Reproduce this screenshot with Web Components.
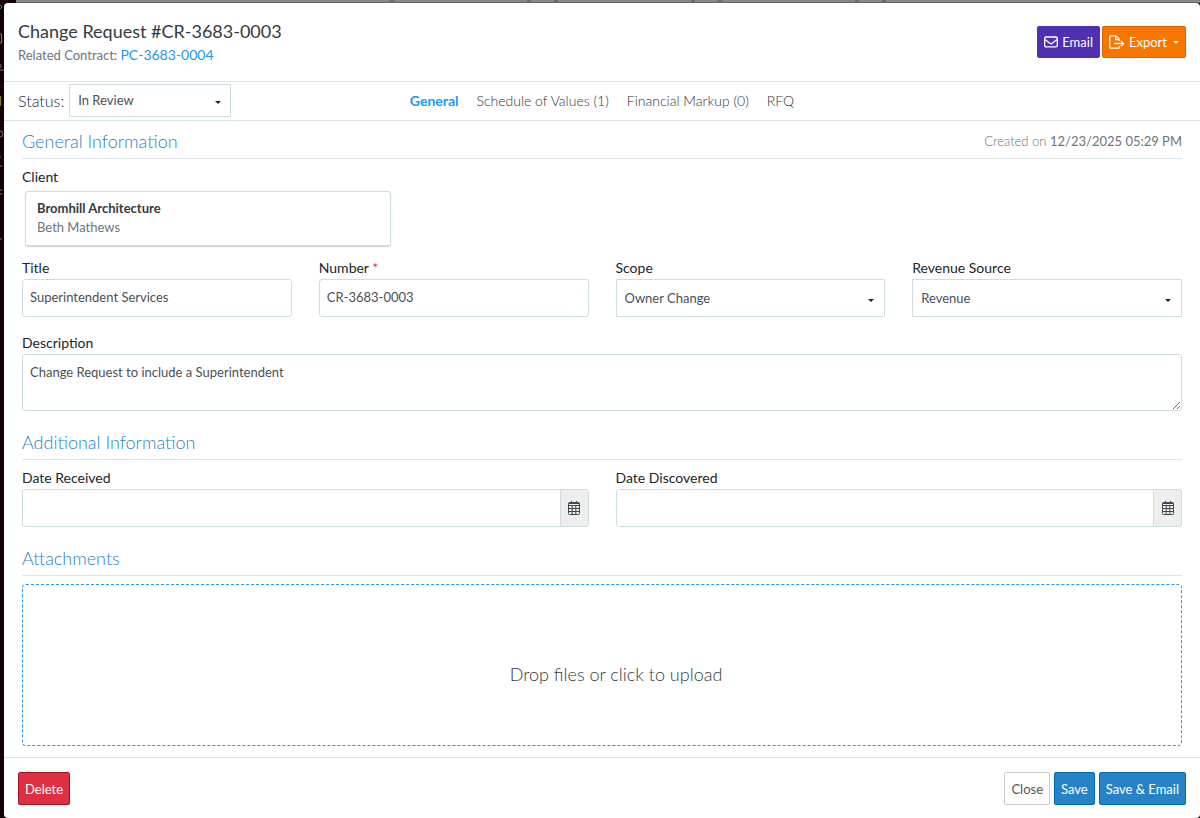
<!DOCTYPE html>
<html lang="en">
<head>
<meta charset="utf-8">
<meta name="viewport" content="width=device-width, initial-scale=1">
<title>Change Request #CR-3683-0003</title>
<style>
  * {
    box-sizing: border-box;
  }

  body {
    --line: #dbe5e5;
    --field-line: #cddddd;
    --blue: #2684c6;
    --link: #2196f3;
    margin: 0;
    min-height: 100vh;
    display: flex;
    font-family: Lato, "Liberation Sans", sans-serif;
    font-size: 14px;
    line-height: 20px;
    color: #212529;
    background: #130304;
  }

  page-backdrop {
    position: absolute;
    top: 0;
    left: 0;
    right: 0;
    height: 250px;
  }

  request-dialog {
    flex: 1;
    margin: 3px 0 0 4px;
  }
</style>
</head>
<body>
<page-backdrop></page-backdrop>

<request-dialog>
  <dialog-title slot="header" heading="Change Request #CR-3683-0003" label="Related Contract:" contract="PC-3683-0004"></dialog-title>
  <action-button slot="header" kind="email" icon="mail">Email</action-button>
  <action-button slot="header" kind="export" icon="export" caret>Export</action-button>

  <status-picker slot="toolbar" value="In Review"></status-picker>
  <tab-bar slot="toolbar" tabs="General|Schedule of Values (1)|Financial Markup (0)|RFQ"></tab-bar>

  <form-section heading="General Information">
    <created-stamp slot="aside" date="12/23/2025 05:29 PM"></created-stamp>
    <client-card label="Client" company="Bromhill Architecture" person="Beth Mathews"></client-card>
    <field-row>
      <form-field label="Title" value="Superintendent Services"></form-field>
      <form-field label="Number" value="CR-3683-0003" required></form-field>
      <form-field type="select" label="Scope" value="Owner Change"></form-field>
      <form-field type="select" label="Revenue Source" value="Revenue"></form-field>
    </field-row>
    <field-row>
      <form-field type="textarea" label="Description" value="Change Request to include a Superintendent"></form-field>
    </field-row>
  </form-section>

  <form-section heading="Additional Information">
    <field-row>
      <form-field type="date" label="Date Received"></form-field>
      <form-field type="date" label="Date Discovered"></form-field>
    </field-row>
  </form-section>

  <form-section heading="Attachments">
    <drop-zone>Drop files or click to upload</drop-zone>
  </form-section>

  <action-button slot="footer-start" kind="danger">Delete</action-button>
  <action-button slot="footer-end" kind="plain">Close</action-button>
  <action-button slot="footer-end" kind="primary">Save</action-button>
  <action-button slot="footer-end" kind="primary">Save &amp; Email</action-button>
</request-dialog>

<script>
const icons = {
  mail: `<svg width="14" height="12" viewBox="0 0 14 12" fill="none" stroke="currentColor" stroke-width="1.3">
      <rect x=".7" y="1" width="12.6" height="9.8" rx="1.3"/>
      <path d="M1 3.6 5.8 7.3Q7 8.2 8.2 7.3L13 3.6"/>
    </svg>`,
  export: `<svg width="16" height="14" viewBox="0 0 16 14" fill="none" stroke="currentColor" stroke-width="1.3">
      <path d="M10.3 6V4.2L7 .8H1.9Q.8.8.8 1.9V12Q.8 13.2 1.9 13.2H9.2Q10.3 13.2 10.3 12V11"/>
      <path d="M6.6 1V4.6H10.3M5 8.5H14.5M11.8 5.8 14.6 8.5 11.8 11.2"/>
    </svg>`,
  calendar: `<svg width="12" height="14" viewBox="0 0 12 14" fill="none" stroke="#3f4650">
      <rect x=".5" y="1.5" width="11" height="12" rx="1"/>
      <path d="M.5 2.5H11.5M.5 4.5H11.5M.5 7.5H11.5M.5 10.5H11.5M4.2 4.5V13.5M7.8 4.5V13.5M3.5 0V2M8.5 0V2"/>
    </svg>`
};

class BaseElement extends HTMLElement {
  constructor() {
    super();
    this.shadow = this.attachShadow({mode: 'open'});
  }

  connectedCallback() {
    this.shadow.innerHTML = this.render();
  }

  attr(name) {
    return this.getAttribute(name) || '';
  }
}

// Strip of the app that stays visible behind the dialog
class PageBackdrop extends BaseElement {
  render() {
    return `<style>
      :host { display: block; }
      .top {
        display: flex;
        box-sizing: border-box;
        height: 3px;
        margin-left: 16px;
        background: #878787;
        border-bottom: 1px solid #666;
      }
      .top i {
        box-sizing: border-box;
        width: 31px;
        margin-left: 133px;
        border: solid #6b6b6b;
        border-width: 0 4px;
      }
      .top i:first-child { width: 4px; border-width: 0 4px 0 0; margin-left: 374px; }
      svg { display: block; }
    </style>
    <div class="top"><i></i><i></i><i></i><i></i></div>
    <svg width="4" height="247" fill="none" stroke="#77706f">
      <path d="M0 2 2 4 0 6"/>
      <path d="M0 31H1.5V40H0" stroke="#8c7a5c"/>
      <path d="M0 61Q3 63 0 65M0 67H4"/>
      <path d="M.5 93V103" stroke="#94742a"/>
      <path d="M0 128Q3 128 3 131Q3 134 0 134"/>
      <path d="M0 154H1M0 163H2M0 187H2M0 191H2M0 236H2"/>
    </svg>`;
  }
}

class RequestDialog extends BaseElement {
  render() {
    return `<style>
      :host {
        position: relative;
        display: flex;
        flex-direction: column;
        background: #fff;
        border-radius: 4px;
      }
      header {
        display: flex;
        align-items: center;
        gap: 2px;
        padding: 15px 14px;
        border-bottom: 1px solid var(--line);
      }
      nav {
        display: grid;
        grid-template-columns: 1fr auto 1fr;
        align-items: center;
        padding: 2px 14px 3px;
        border-bottom: 1px solid var(--line);
      }
      main {
        flex: 1;
        display: flex;
        flex-direction: column;
        gap: 17px;
        padding: 6px 18px 11px;
      }
      footer {
        display: flex;
        justify-content: space-between;
        padding: 14px 14px 13px;
        border-top: 1px solid var(--line);
      }
      footer div { display: flex; gap: 4px; }
    </style>
    <header><slot name="header"></slot></header>
    <nav><slot name="toolbar"></slot></nav>
    <main><slot></slot></main>
    <footer>
      <div><slot name="footer-start"></slot></div>
      <div><slot name="footer-end"></slot></div>
    </footer>`;
  }
}

class DialogTitle extends BaseElement {
  render() {
    return `<style>
      :host { display: block; flex: 1; }
      h1 { margin: 0; font-size: 18px; line-height: 26px; font-weight: 400; color: #343a40; }
      p { margin: 0; font-size: 13px; line-height: 22px; color: #6c757d; }
      a { color: var(--link); font-size: 14px; text-decoration: none; }
    </style>
    <h1>${this.attr('heading')}</h1>
    <p>${this.attr('label')} <a href="#contract">${this.attr('contract')}</a></p>`;
  }
}

class ActionButton extends BaseElement {
  render() {
    const icon = icons[this.attr('icon')] || '';
    const caret = this.hasAttribute('caret') ? '<span class="caret"></span>' : '';
    return `<style>
      :host { display: block; }
      button {
        display: flex;
        align-items: center;
        gap: 4px;
        height: 33px;
        padding: 0 6px;
        border: 1px solid var(--edge);
        border-radius: 2px;
        background: var(--fill);
        color: #fff;
        font: inherit;
        font-size: 13px;
        white-space: nowrap;
      }
      :host([kind=email]) { --fill: #512fb1; --edge: #512fb1; }
      :host([kind=export]) { --fill: #f77600; --edge: #d96500; }
      :host([kind=danger]) { --fill: #df3043; --edge: #a3121f; }
      :host([kind=primary]) { --fill: #2684c6; --edge: #006bb0; }
      :host([kind=plain]) { --fill: #fff; --edge: #ccc; }
      :host([kind=email]) button, :host([kind=export]) button { height: 32px; }
      :host([kind=plain]) button { color: #555; }
      .caret {
        margin-left: 2px;
        border: 3px solid transparent;
        border-top-color: currentColor;
        border-bottom: 0;
      }
    </style>
    <button type="button">${icon}<span><slot></slot></span>${caret}</button>`;
  }
}

class StatusPicker extends BaseElement {
  render() {
    return `<style>
      :host { display: flex; align-items: center; gap: 5px; }
      label { font-size: 16px; font-weight: 300; color: #212529; }
      .select { position: relative; width: 162px; }
      select {
        appearance: none;
        display: block;
        width: 100%;
        height: 33px;
        padding: 0 8px 2px;
        border: 1px solid var(--field-line);
        border-radius: 1px;
        background: #fff;
        color: #495057;
        font: inherit;
        font-size: 13px;
      }
      .select::after {
        content: "";
        position: absolute;
        right: 10px;
        top: 17px;
        border: 3px solid transparent;
        border-top-color: #212529;
        border-bottom: 0;
      }
    </style>
    <label for="status">Status:</label>
    <div class="select"><select id="status"><option>${this.attr('value')}</option></select></div>`;
  }
}

class TabBar extends BaseElement {
  render() {
    const tabs = this.attr('tabs').split('|');
    return `<style>
      :host { display: flex; gap: 18px; }
      a { color: #333; font-weight: 300; text-decoration: none; white-space: nowrap; }
      a[aria-current] { color: var(--link); font-weight: 700; }
    </style>
    ${tabs.map((tab, i) => `<a href="#tab-${i}"${i === 0 ? ' aria-current="page"' : ''}>${tab}</a>`).join('')}`;
  }
}

class FormSection extends BaseElement {
  render() {
    return `<style>
      :host { display: block; }
      header {
        display: flex;
        align-items: center;
        justify-content: space-between;
        padding-bottom: 3px;
        margin-bottom: 8px;
        border-bottom: 1px solid var(--line);
      }
      h2 { margin: 0; font-size: 18px; line-height: 28px; font-weight: 300; color: var(--blue); }
      .content { display: flex; flex-direction: column; gap: 16px; }
    </style>
    <header><h2>${this.attr('heading')}</h2><slot name="aside"></slot></header>
    <div class="content"><slot></slot></div>`;
  }
}

class CreatedStamp extends BaseElement {
  render() {
    return `<style>
      :host { display: block; font-size: 13px; font-weight: 300; color: #6c757d; }
      time { font-weight: 400; }
    </style>
    Created on <time>${this.attr('date')}</time>`;
  }
}

class ClientCard extends BaseElement {
  render() {
    return `<style>
      :host { display: block; margin-bottom: -4px; }
      .card {
        width: 366px;
        max-width: 100%;
        box-sizing: border-box;
        margin: 4px 3px 0;
        padding: 7px 11px 8px;
        border: 1px solid var(--field-line);
        border-radius: 3px;
        box-shadow: 0 1px 1px #c4d2d2;
        font-size: 13px;
        line-height: 19px;
      }
      strong { display: block; color: #343a40; }
      .person { color: #6c757d; }
    </style>
    <div>${this.attr('label')}</div>
    <div class="card">
      <strong>${this.attr('company')}</strong>
      <span class="person">${this.attr('person')}</span>
    </div>`;
  }
}

class FieldRow extends BaseElement {
  render() {
    return `<style>
      :host { display: flex; gap: 27px; }
      ::slotted(*) { flex: 1; min-width: 0; }
    </style>
    <slot></slot>`;
  }
}

class FormField extends BaseElement {
  control() {
    const value = this.attr('value');
    switch (this.attr('type')) {
      case 'select':
        return `<div class="select"><select id="control"><option>${value}</option></select></div>`;
      case 'textarea':
        return `<textarea id="control">${value}</textarea>`;
      case 'date':
        return `<div class="date">
          <input id="control" type="text">
          <button type="button" aria-label="Open calendar">${icons.calendar}</button>
        </div>`;
      default:
        return `<input id="control" type="text" value="${value}">`;
    }
  }

  render() {
    const star = this.hasAttribute('required') ? ' <span class="star">*</span>' : '';
    return `<style>
      :host { display: block; }
      * { box-sizing: border-box; }
      label { display: block; margin-bottom: 1px; }
      .star { color: #dc3545; }
      input, select, textarea {
        display: block;
        width: 100%;
        height: 38px;
        margin: 0;
        padding: 0 7px 2px;
        border: 1px solid var(--field-line);
        border-radius: 3px;
        background: #fff;
        color: #495057;
        font: inherit;
        font-size: 13px;
      }
      select { appearance: none; padding: 0 8px; border-radius: 1px; }
      textarea { height: 57px; padding-top: 7px; resize: vertical; }
      .select { position: relative; }
      .select::after {
        content: "";
        position: absolute;
        right: 11px;
        top: 20px;
        border: 3px solid transparent;
        border-top-color: #212529;
        border-bottom: 0;
      }
      .date { display: flex; }
      .date input { flex: 1; min-width: 0; border-radius: 3px 0 0 3px; }
      .date button {
        display: flex;
        align-items: center;
        justify-content: center;
        width: 28px;
        padding: 0;
        border: 1px solid var(--field-line);
        border-left: 0;
        border-radius: 0 3px 3px 0;
        background: #eee;
      }
    </style>
    <label for="control">${this.attr('label')}${star}</label>
    ${this.control()}`;
  }
}

class DropZone extends BaseElement {
  render() {
    return `<style>
      :host { display: block; }
      button {
        display: block;
        width: 100%;
        height: 162px;
        padding: 18px 0 0 28px;
        border: 1px dashed var(--link);
        border-radius: 4px;
        background: #fff;
        color: #343a40;
        font: inherit;
        font-size: 18px;
        font-weight: 300;
      }
    </style>
    <button type="button"><slot></slot></button>`;
  }
}

customElements.define('page-backdrop', PageBackdrop);
customElements.define('request-dialog', RequestDialog);
customElements.define('dialog-title', DialogTitle);
customElements.define('action-button', ActionButton);
customElements.define('status-picker', StatusPicker);
customElements.define('tab-bar', TabBar);
customElements.define('form-section', FormSection);
customElements.define('created-stamp', CreatedStamp);
customElements.define('client-card', ClientCard);
customElements.define('field-row', FieldRow);
customElements.define('form-field', FormField);
customElements.define('drop-zone', DropZone);
</script>
</body>
</html>
